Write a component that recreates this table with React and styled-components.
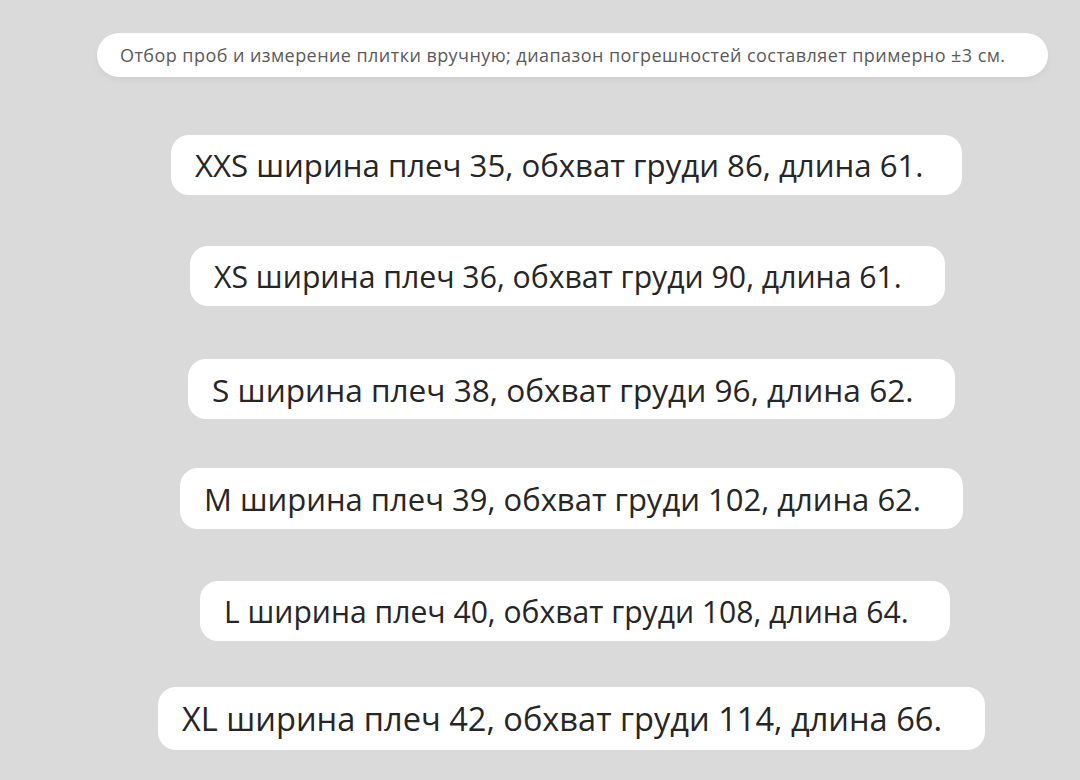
import React from 'react';
import styled, { createGlobalStyle } from 'styled-components';

const GlobalStyle = createGlobalStyle`
  html, body {
    margin: 0;
    padding: 0;
    background: #dadada;
  }
  body {
    width: 1080px;
    height: 780px;
    overflow: hidden;
    font-family: "Open Sans", "Noto Sans", sans-serif;
  }
`;

const Page = styled.div`
  width: 1080px;
  height: 780px;
  display: flex;
  flex-direction: column;
  align-items: flex-start;
  padding-top: 33px;
  box-sizing: border-box;
`;

const Note = styled.div`
  margin-left: 97px;
  width: 951px;
  height: 44px;
  box-sizing: border-box;
  display: flex;
  align-items: center;
  padding-left: 23px;
  background: #ffffff;
  border-radius: 22px;
  color: #5a5a5a;
  font-size: 18px;
  letter-spacing: 0.44px;
  white-space: nowrap;
  box-shadow: 0 3px 6px rgba(0, 0, 0, 0.05);
`;

const SizeList = styled.div`
  display: flex;
  flex-direction: column;
  margin-top: 58px;
`;

const SizePill = styled.div`
  margin-left: ${p => p.$left}px;
  margin-top: ${p => p.$gap}px;
  width: ${p => p.$width}px;
  height: ${p => p.$height}px;
  box-sizing: border-box;
  display: flex;
  align-items: center;
  padding-left: 24px;
  background: #ffffff;
  border-radius: 18px;
  color: #262626;
  font-size: ${p => p.$font}px;
  white-space: nowrap;
`;

const sizes = [
  { left: 171, gap: 0, width: 791, height: 60, font: 31.2, text: 'XXS ширина плеч 35, обхват груди 86, длина 61.' },
  { left: 190, gap: 51, width: 755, height: 60, font: 30.2, text: 'XS ширина плеч 36, обхват груди 90, длина 61.' },
  { left: 188, gap: 53, width: 767, height: 60, font: 31.6, text: 'S ширина плеч 38, обхват груди 96, длина 62.' },
  { left: 180, gap: 49, width: 783, height: 61, font: 31, text: 'M ширина плеч 39, обхват груди 102, длина 62.' },
  { left: 200, gap: 52, width: 750, height: 60, font: 30.1, text: 'L ширина плеч 40, обхват груди 108, длина 64.' },
  { left: 158, gap: 46, width: 827, height: 63, font: 32.6, text: 'XL ширина плеч 42, обхват груди 114, длина 66.' },
];

export default function App() {
  return (
    <>
      <GlobalStyle />
      <Page>
        <Note>Отбор проб и измерение плитки вручную; диапазон погрешностей составляет примерно ±3 см.</Note>
        <SizeList>
          {sizes.map(s => (
            <SizePill
              key={s.text}
              $left={s.left}
              $gap={s.gap}
              $width={s.width}
              $height={s.height}
              $font={s.font}
            >
              {s.text}
            </SizePill>
          ))}
        </SizeList>
      </Page>
    </>
  );
}
